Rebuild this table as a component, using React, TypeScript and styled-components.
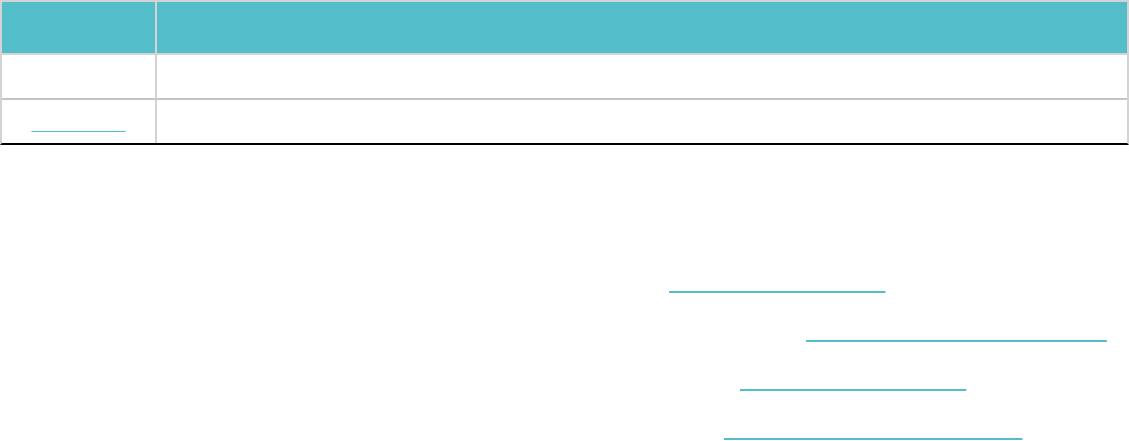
import styled, { createGlobalStyle } from "styled-components";

const teal = "#53bdca";

const GlobalStyle = createGlobalStyle`
    body {
        margin: 0;
        background: #ffffff;
        font-family: "Liberation Sans", Arial, sans-serif;
    }
`;

const Page = styled.div`
    width: 1129px;
    height: 441px;
    overflow: hidden;
    color: transparent;
`;

const Table = styled.table`
    width: 100%;
    border-collapse: separate;
    border-spacing: 0;
    border-top: 2px solid #d3d3d3;
    border-left: 2px solid #d3d3d3;
    border-right: 2px solid #d3d3d3;
    border-bottom: 2px solid #000000;
    font-size: 14px;
`;

const Head = styled.th`
    height: 51px;
    padding: 0 12px;
    background: ${teal};
    border-bottom: 2px solid #d3d3d3;
    text-align: left;
    font-weight: bold;
    &:first-child {
        width: 129px;
        border-right: 2px solid #d3d3d3;
        text-align: center;
    }
`;

const Cell = styled.td<{ $last?: boolean; $pad?: number }>`
    height: ${(p) => 43 - (p.$pad ?? 0)}px;
    padding: ${(p) => p.$pad ?? 0}px 12px 0;
    border-bottom: ${(p) => (p.$last ? "none" : "2px solid #c4c4c4")};
    &:first-child {
        border-right: 2px solid #d3d3d3;
        text-align: center;
    }
`;

const CellLink = styled.a`
    color: transparent;
    text-decoration: underline;
    text-decoration-color: ${teal};
    text-decoration-thickness: 1px;
    text-decoration-skip-ink: none;
`;

const Notes = styled.section`
    padding-top: 113px;
    font-size: 22px;
`;

const Line = styled.p`
    margin: 0;
    line-height: 49px;
    white-space: nowrap;
`;

const Label = styled.span<{ $w: number }>`
    display: inline-block;
    width: ${(p) => p.$w}px;
    white-space: nowrap;
`;

const NoteLink = styled.a`
    color: transparent;
    text-decoration: underline;
    text-decoration-color: ${teal};
    text-decoration-thickness: 2px;
    text-decoration-skip-ink: none;
`;

const notes = [
    { label: "For step-by-step instructions on setting things up:", at: 669, link: "Read the user manual" },
    { label: "For every option, setting and reference page in the product:", at: 806, link: "Browse the full documentation." },
    { label: "If you run into a problem that you cannot solve alone:", at: 740, link: "Contact support online." },
    { label: "To see what has changed in the most recent version:", at: 724, link: "Read the release notes online." },
];

const App = () => {
    return (
        <Page>
            <GlobalStyle />
            <Table>
                <thead>
                    <tr>
                        <Head>Version</Head>
                        <Head>Notes</Head>
                    </tr>
                </thead>
                <tbody>
                    <tr>
                        <Cell>Current</Cell>
                        <Cell>The latest stable release of the application.</Cell>
                    </tr>
                    <tr>
                        <Cell $last $pad={6}>
                            <CellLink href="#">Download here</CellLink>
                        </Cell>
                        <Cell $last $pad={6}>Installer for all supported platforms.</Cell>
                    </tr>
                </tbody>
            </Table>
            <Notes>
                {notes.map((n) => (
                    <Line key={n.link}>
                        <Label $w={n.at}>{n.label}</Label>
                        <NoteLink href="#">{n.link}</NoteLink>
                    </Line>
                ))}
            </Notes>
        </Page>
    );
};

export default App;
